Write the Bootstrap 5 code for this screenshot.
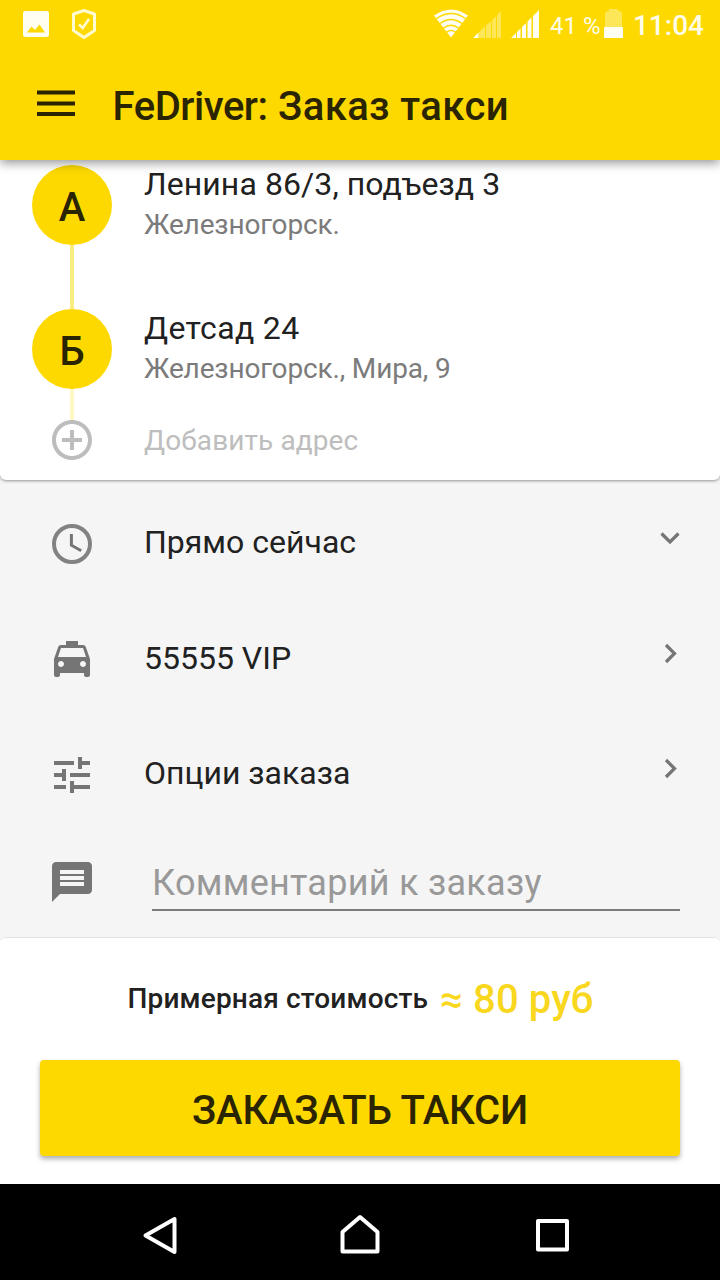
<!DOCTYPE html>
<html lang="ru">
<head>
<meta charset="utf-8">
<meta name="viewport" content="width=device-width, initial-scale=1">
<title>FeDriver</title>
<link href="https://cdn.jsdelivr.net/npm/bootstrap@5.3.0/dist/css/bootstrap.min.css" rel="stylesheet">
<style>
  body{font-family:Roboto,"Noto Sans",sans-serif;background:#f5f5f5;color:#212121;height:1280px;overflow:hidden}
  svg{display:block;flex:none}
  .topbar{background:#fdd900;height:160px;box-shadow:0 3px 10px rgba(0,0,0,.42);z-index:2;color:#2b2400}
  .status{height:48px;color:#fffce8;line-height:48px}
  .st-pct{width:50px;font-size:24px;margin:3px 0 0 10px;white-space:nowrap}
  .st-time{font-size:28px;font-weight:500;margin:3px 16px 0 9px}
  .appbar{height:112px;padding-left:32px}
  .title{font-size:40px;font-weight:500;line-height:48px;margin:5px 0 0 32.500px;letter-spacing:.4px}
  .brand{letter-spacing:-.45px}
  .route{height:320px;padding:5px 32px 0;border-radius:0 0 6px 6px;box-shadow:0 1px 3px rgba(0,0,0,.4);z-index:1}
  .stop{height:144px}
  .stop-b{height:111px}
  .mark-col{width:80px}
  .dot{width:80px;height:80px;background:#fdd900;color:#2b2400;font-size:40px;font-weight:500;line-height:86px}
  .link-line{width:4px;background:#f9ec80}
  .link-line.faint{background:#fdf8c4}
  .place{font-size:32px;line-height:38px;margin-left:32px;letter-spacing:.08px}
  .place small{display:block;font-size:28px;line-height:38px;color:#7b7b7b;margin-top:3px;letter-spacing:-.15px}
  .t-b{letter-spacing:.35px}
  .add-stop{height:40px;color:#bdbdbd;font-size:28px;line-height:42px;letter-spacing:.1px}
  .add-stop span{margin:2px 0 0 32px}
  .opts{height:457px;padding:6px 30px 0 48px;color:#212121}
  .opt{height:115.5px;font-size:32px}
  .opt svg,.comment svg{color:#757575}
  .opt-label{margin:-3px 0 0 48px}
  .opt .chev{margin-bottom:15px}
  .comment{padding-top:22px}
  .comment svg{margin-top:3px}
  .comment-field{margin:0 10px 0 56px;height:56px;border-bottom:2px solid #7b7b7b;font-size:36px;line-height:57px;color:#999;letter-spacing:.27px}
  .bottom{height:247px;border-top:1px solid #e3e3e3;border-radius:6px 6px 0 0;padding:0 40px}
  .price-row{height:122px;padding-left:1px}
  .price-label{font-size:28px;font-weight:500;letter-spacing:.15px}
  .price{font-size:40px;font-weight:500;color:#f8d71e;margin:2px 0 0 12px;letter-spacing:.1px}
  .order{height:96px;background:#fdd900;color:#2b2400;font-size:40px;font-weight:500;border:0;border-radius:4px;box-shadow:0 3px 5px rgba(0,0,0,.32);padding:5px 0 0;letter-spacing:-.2px}
  .sysnav{height:96px;background:#000}
</style>
</head>
<body class="d-flex flex-column">
<header class="topbar position-relative flex-shrink-0">
  <div class="status d-flex align-items-center">
    <svg width="100" height="48" fill="none">
      <path fill="#fffef0" fill-rule="evenodd" d="M25 11h22q2 0 2 2v22q0 2-2 2H25q-2 0-2-2V13q0-2 2-2ZM27 32.500H45L39.500 24.500 35 30 31.500 26.500Z"/>
      <path stroke="#fffbd0" stroke-width="3" stroke-linejoin="round" d="M84 10.500 94.500 14V30.500L84 37.500 73.500 30.500V14Z"/>
      <path stroke="#fffbd0" stroke-width="2.600" d="M79 24.500 82.700 28 89 19"/>
    </svg>
    <svg class="ms-auto" width="110" height="48" fill="none">
      <g transform="translate(-430 0)">
        <path fill="#fffef0" d="M434 15.500Q451 3.500 468 15.500L451 37.500Z"/>
        <g stroke="#fdd900" stroke-width="1.500"><path d="M436.500 18.500Q451 8.500 465.500 18.500M440 23.500Q451 15.500 462 23.500M443.500 28Q451 22.500 458.500 28M446.500 32.200Q451 29 455.500 32.200"/></g>
        <path fill="#fff" opacity=".35" d="M479 32 485 26.500V38H479ZM486 25.500 491 21V38H486ZM492 20 496 16.500V38H492ZM497 15.500 501 11V38H497Z"/>
        <path fill="#fffef0" d="M473 38 478.500 32.500V38ZM511 38 516 33V38ZM517 32 520.500 28.500V38H517ZM522 27 526 23V38H522ZM527.500 21.500 531.500 17.500V38H527.500ZM533 16 539 10V38H533Z"/>
      </g>
    </svg>
    <span class="st-pct">41 %</span>
    <svg class="ms-1" width="20" height="48"><path fill="#fff" opacity=".35" d="M1 14Q1 11 5 11V9H14V11Q18 11 18 14V27H1Z"/><path fill="#fffef0" d="M0 27H19V38H0Z"/></svg>
    <span class="st-time">11:04</span>
  </div>
  <div class="appbar d-flex align-items-center">
    <svg width="48" height="48" fill="currentColor"><path d="M5 10.500H43V14.500H5ZM5 21.500H43V25.500H5ZM5 32H43V36H5Z"/></svg>
    <h1 class="title"><span class="brand">FeDriver:</span> Заказ такси</h1>
  </div>
</header>

<section class="route bg-white position-relative flex-shrink-0">
  <div class="stop d-flex">
    <div class="mark-col d-flex flex-column align-items-center"><div class="dot rounded-circle text-center flex-shrink-0">А</div><div class="link-line flex-grow-1"></div></div>
    <div class="place"><span class="t-a">Ленина 86/3, подъезд 3</span><small>Железногорск.</small></div>
  </div>
  <div class="stop stop-b d-flex">
    <div class="mark-col d-flex flex-column align-items-center"><div class="dot rounded-circle text-center flex-shrink-0">Б</div><div class="link-line faint flex-grow-1"></div></div>
    <div class="place"><span class="t-b">Детсад 24</span><small>Железногорск., Мира, 9</small></div>
  </div>
  <div class="add-stop d-flex align-items-center">
    <div class="mark-col d-flex justify-content-center"><svg width="48" height="48" viewBox="0 0 24 24" fill="currentColor"><path d="M13 7h-2v4H7v2h4v4h2v-4h4v-2h-4V7zm-1-5C6.480 2 2 6.480 2 12s4.480 10 10 10 10-4.480 10-10S17.520 2 12 2zm0 18c-4.410 0-8-3.590-8-8s3.590-8 8-8 8 3.590 8 8-3.590 8-8 8z"/></svg></div>
    <span>Добавить адрес</span>
  </div>
</section>

<section class="opts flex-shrink-0">
  <div class="opt d-flex align-items-center">
    <svg width="48" height="48" viewBox="0 0 24 24" fill="none" stroke="currentColor" stroke-width="2"><circle cx="12" cy="12" r="9" opacity=".9"/><path stroke-width="1.500" d="M11.700 7V12.600L16.600 15.400"/></svg>
    <span class="opt-label">Прямо сейчас</span>
    <svg class="chev ms-auto" width="40" height="48" fill="none" stroke="currentColor" stroke-width="3.200"><path d="M11.500 21.500 20 30 28.500 21.500"/></svg>
  </div>
  <div class="opt d-flex align-items-center">
    <svg width="48" height="48" viewBox="0 0 24 24" fill="currentColor"><path d="M18.920 6.010C18.720 5.420 18.160 5 17.500 5H15V3H9v2H6.500c-.66 0-1.210.42-1.420 1.010L3 12v8c0 .55.45 1 1 1h1c.55 0 1-.45 1-1v-1h12v1c0 .55.45 1 1 1h1c.55 0 1-.45 1-1v-8l-2.080-5.990zM6.500 16c-.83 0-1.500-.67-1.500-1.500S5.670 13 6.500 13s1.500.67 1.500 1.500S7.330 16 6.500 16zm11 0c-.83 0-1.500-.67-1.500-1.500s.67-1.500 1.500-1.500 1.500.67 1.500 1.500-.67 1.500-1.500 1.500zM5 11l1.500-4.500h11L19 11H5z"/></svg>
    <span class="opt-label">55555 VIP</span>
    <svg class="chev ms-auto" width="40" height="48" fill="none" stroke="currentColor" stroke-width="3.200"><path d="M16 17 24.500 25.500 16 34"/></svg>
  </div>
  <div class="opt d-flex align-items-center">
    <svg width="48" height="48" viewBox="0 0 24 24" fill="currentColor"><path d="M3 17v2h6v-2H3zM3 5v2h10V5H3zm10 16v-2h8v-2h-8v-2h-2v6h2zM7 9v2H3v2h4v2h2V9H7zm14 4v-2H11v2h10zm-6-4h2V7h4V5h-4V3h-2v6z"/></svg>
    <span class="opt-label">Опции заказа</span>
    <svg class="chev ms-auto" width="40" height="48" fill="none" stroke="currentColor" stroke-width="3.200"><path d="M16 17 24.500 25.500 16 34"/></svg>
  </div>
  <div class="comment d-flex">
    <svg width="48" height="48" viewBox="0 0 24 24" fill="currentColor"><path d="M20 2H4c-1.100 0-1.990.9-1.990 2L2 22l4-4h14c1.100 0 2-.9 2-2V4c0-1.100-.9-2-2-2zm-2 12H6v-2h12v2zm0-3H6V9h12v2zm0-3H6V6h12v2z"/></svg>
    <div class="comment-field flex-grow-1"><span>Комментарий к заказу</span></div>
  </div>
</section>

<section class="bottom bg-white flex-shrink-0">
  <div class="price-row d-flex justify-content-center align-items-center">
    <span class="price-label">Примерная стоимость</span><span class="price">≈ 80 руб</span>
  </div>
  <button class="order btn w-100" type="button">ЗАКАЗАТЬ ТАКСИ</button>
</section>

<nav class="sysnav flex-shrink-0">
  <svg width="720" height="96" fill="none" stroke="#fff" stroke-width="4" stroke-linejoin="round"><path d="M145.500 51.500 174.500 35V68Z"/><path d="M342.500 67.500V48L360 33 377.500 48V67.500Z"/><path d="M538 37H567V65.500H538Z"/></svg>
</nav>
<script src="https://cdn.jsdelivr.net/npm/bootstrap@5.3.0/dist/js/bootstrap.bundle.min.js"></script>
</body>
</html>
